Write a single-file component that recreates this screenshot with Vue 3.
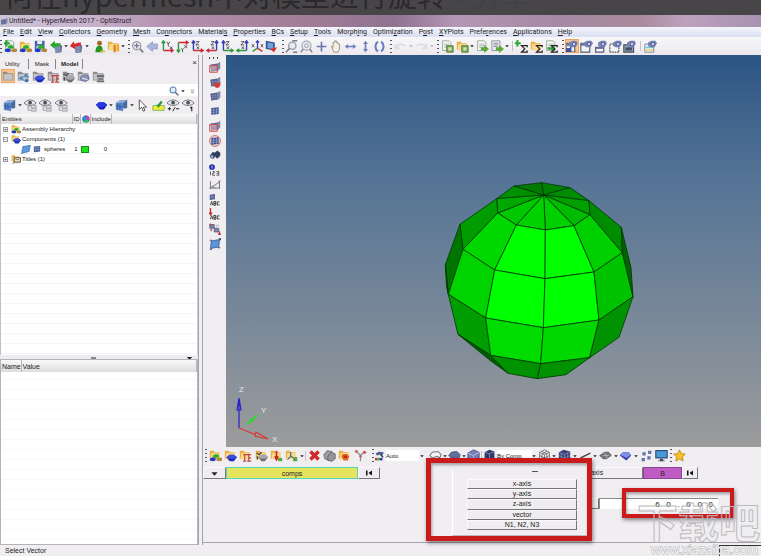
<script setup>
import { ref, h } from 'vue'

const menus = [
  ['', 'F', 'ile'], ['', 'E', 'dit'], ['', 'V', 'iew'], ['', 'C', 'ollectors'], ['', 'G', 'eometry'],
  ['', 'M', 'esh'], ['Co', 'n', 'nectors'], ['Material', 's', ''], ['', 'P', 'roperties'], ['', 'B', 'Cs'],
  ['', 'S', 'etup'], ['', 'T', 'ools'], ['Morph', 'i', 'ng'], ['Optimi', 'z', 'ation'], ['P', 'o', 'st'],
  ['', 'X', 'YPlots'], ['Prefe', 'r', 'ences'], ['', 'A', 'pplications'], ['', 'H', 'elp'],
]

// Every icon is a stack of symbol layers, drawn back to front.
const Icon = (props) => h('svg', { viewBox: '0 0 16 16', class: 'icon', 'aria-hidden': 'true' },
  props.name.split(' ').map((n) => h('use', { href: '#i-' + n })))
Icon.props = ['name']

const topGroups = [
  ['grip', 'page blobs plus', 'folder blobs', 'disk blobs', 'cubeR inarrow', 'arr', 'cubeR outarrow', 'arr'],
  ['person', 'folder cards', 'arr'],
  ['grip', 'fit', 'back', 'axL tY', 'axT tX', 'axB tZ', 'axR tZ', 'axG tZ', 'axH tZ', 'iso', 'film'],
  ['grip', 'zoomw', 'zoomc', 'cross', 'hand', 'lr', 'ud', 'rot'],
  ['grip', 'undo', 'arr', 'redo', 'arr'],
  ['grip', 'page gbox', 'folder gbox', 'arr', 'page garrow', 'page2 garrow', 'arr'],
  ['sep', 'plus sigma', 'folder sigma', 'page garrow2 sigma'],
  ['grip', 'win gear disk2 on', 'win gear', 'winS gear', 'winD gear', 'winF gear'],
  ['sep', 'winC gear'],
]
const browserIcons = ['gfolder on', 'gfolder nodes', 'gfolder slab', 'gfolder te', 'gfolder gslab tick', 'gfolder lens', 'gfolder stack']
const viewIconsA = ['cubeL', 'arr', 'eye tree', 'eye tree', 'eye tree']
const viewIconsB = ['slabc', 'arr', 'cubeL', 'arr', 'cursor', 'ylw', 'eye pm', 'eye one']
const sideIcons = ['cube rframe', 'cube minus', 'cube', 'cubeg', 'cube rframe', 'circ cubeg', 'bino', 'n123', 'meas', 'abc minicube', 'abc rpin', 'nums', 'sheet']

const bottomA = ['grip', 'folder blobs', 'folder slab', 'folder te', 'folder gslab tick', 'folder load', 'folder triad', 'arr', 'sep', 'del', 'cards2', 'folder hot', 'branch']
const bottomB = ['wirehex', 'arr', 'shade', 'arr', 'bluecube', 'sep', 'darkcube']
const bottomC = ['arr', 'wirecube', 'arr', 'meshcube', 'arr', 'line', 'arr', 'plate', 'arr', 'slabl', 'arr', 'fours', 'monitor', 'grip', 'star']

const axes = ['x-axis', 'y-axis', 'z-axis', 'vector', 'N1, N2, N3']
const angle = ref('6   0   .   0   0   0')
const search = ref('')

const faces = [
  ['200,86 252,48 341,75', '#008f00'], ['252,48 335,38 341,75', '#007a00'], ['335,38 420,53 341,75', '#008000'],
  ['420,53 477,92 341,75', '#008c00'], ['477,92 480,134 341,75', '#00a000'], ['480,134 432,167 341,75', '#00bb00'],
  ['432,167 346,180 341,75', '#00d000'], ['346,180 259,165 341,75', '#00d200'], ['259,165 203,129 341,75', '#00c800'],
  ['203,129 200,86 341,75', '#00a800'],
  ['200,86 203,129 99,238 90,163', '#009c00'], ['203,129 259,165 194,300 99,238', '#00d800'],
  ['259,165 346,180 345,326 194,300', '#00ff00'], ['346,180 432,167 492,306 345,326', '#00ff00'],
  ['432,167 480,134 577,248 492,306', '#00cf00'], ['480,134 477,92 574,172 577,248', '#008c00'],
  ['90,163 99,238 55,373 46,284', '#007600'], ['99,238 194,300 167,444 55,373', '#00d400'],
  ['194,300 345,326 340,473 167,444', '#00ff00'], ['345,326 492,306 507,450 340,473', '#00ff00'],
  ['492,306 577,248 609,380 507,450', '#00c300'], ['577,248 574,172 603,293 609,380', '#006400'],
  ['46,284 55,373 50,352', '#005000'],
  ['55,373 167,444 182,556 84,493', '#009e00'], ['167,444 340,473 332,581 182,556', '#00dc00'],
  ['340,473 507,450 479,563 332,581', '#00d800'], ['507,450 609,380 567,502 479,563', '#009200'],
  ['84,493 182,556 234,610 184,574', '#005c00'], ['182,556 332,581 322,626 234,610', '#009200'],
  ['332,581 479,563 408,614 322,626', '#009200'],
]
</script>

<template>
  <svg class="defs" aria-hidden="true">
    <symbol id="i-on" viewBox="0 0 16 16"></symbol>
    <symbol id="i-arr" viewBox="0 0 16 16"><path d="M1 5h14l-7 8z" fill="#222" /></symbol>
    <symbol id="i-folder" viewBox="0 0 16 16"><path d="M1 2h5l1 2h6v8H1z" fill="#e8b048" /><path d="M3 5h11l-1 8H2z" fill="#fbd98a" /></symbol>
    <symbol id="i-gfolder" viewBox="0 0 16 16"><path d="M1 2h5l1 2h7v9H1z" fill="#8c8c90" /><path d="M2 5h11v7H2z" fill="#c6c4c6" /></symbol>
    <symbol id="i-page" viewBox="0 0 16 16"><path d="M2 1h8l2 2v10H2z" fill="#f7f8f4" stroke="#8d9a8a" /><path d="M4 5h6M4 7h6M4 9h5" stroke="#9ab" /></symbol>
    <symbol id="i-page2" viewBox="0 0 16 16"><path d="M1 1h10v12H1z" fill="#e8e8ee" stroke="#888" /><path d="M3 4h6M3 6h6M3 8h5" stroke="#889" /></symbol>
    <symbol id="i-blobs" viewBox="0 0 16 16"><path d="M5 8l3-2 4 1v3l-4 1-3-1z" fill="#2bae2b" /><path d="M1 12l3-2 4 1v3l-3 1-4-1z" fill="#2036c4" /><path d="M9 12l3-2 4 1v3l-3 1-4-1z" fill="#b08a3a" /></symbol>
    <symbol id="i-plus" viewBox="0 0 16 16"><path d="M3 0v8M0 4h7" stroke="#29a629" stroke-width="2.4" /></symbol>
    <symbol id="i-disk" viewBox="0 0 16 16"><path d="M1 1h12v11H1z" fill="#47659c" /><path d="M4 1h6v4H4z" fill="#e9eef8" /><path d="M3 7h8v5H3z" fill="#c8d4e8" /></symbol>
    <symbol id="i-disk2" viewBox="0 0 16 16"><path d="M0 8h8v7H0z" fill="#3b4f9c" /><path d="M2 8h4v2H2z" fill="#fff" /></symbol>
    <symbol id="i-cubeR" viewBox="0 0 16 16"><path d="M6 7l7-1 2 1-1 8-7 1z" fill="#5a6790" /><path d="M6 7l7-1v8l-6 2z" fill="#7f8cb4" /></symbol>
    <symbol id="i-inarrow" viewBox="0 0 16 16"><path d="M0 6l6-5v3h7v4H6v3z" fill="#2ba52b" /></symbol>
    <symbol id="i-outarrow" viewBox="0 0 16 16"><path d="M0 6l6-5v3h8v4H6v3z" fill="#d82c2c" transform="rotate(-12 8 8)" /></symbol>
    <symbol id="i-person" viewBox="0 0 16 16"><circle cx="8" cy="4" r="3" fill="#a5642c" /><path d="M3 15c0-6 2-8 5-8s4 2 4 8z" fill="#279427" /><path d="M9 13h6v2H9z" fill="#d8c030" /></symbol>
    <symbol id="i-cards" viewBox="0 0 16 16"><path d="M8 6h3v9H8z" fill="#e08424" /><path d="M12 5h3v9h-3z" fill="#f4a637" /></symbol>
    <symbol id="i-fit" viewBox="0 0 16 16"><circle cx="7" cy="7" r="5" fill="#e3e6f0" stroke="#9c9fac" stroke-width="1.6" /><path d="M7 4v6M4 7h6" stroke="#73768e" stroke-width="1.5" /><path d="M11 11l4 4" stroke="#888" stroke-width="2.4" /></symbol>
    <symbol id="i-back" viewBox="0 0 16 16"><path d="M1 8l7-6v3h6v6H8v3z" fill="#a9b6dc" stroke="#8e9ac8" /></symbol>
    <symbol id="i-axL" viewBox="0 0 16 16"><path d="M3 13V2M1 4l2-3 2 3" stroke="#2e9c3e" stroke-width="1.7" fill="none" /><path d="M3 13h11M12 11l3 2-3 2" stroke="#cc2d3a" stroke-width="1.7" fill="none" /></symbol>
    <symbol id="i-axT" viewBox="0 0 16 16"><path d="M3 3v11M1 12l2 3 2-3" stroke="#2e9c3e" stroke-width="1.7" fill="none" /><path d="M3 3h11M12 1l3 2-3 2" stroke="#cc2d3a" stroke-width="1.7" fill="none" /></symbol>
    <symbol id="i-axB" viewBox="0 0 16 16"><path d="M3 13V2M1 4l2-3 2 3" stroke="#3540b8" stroke-width="1.7" fill="none" /><path d="M3 13h11M12 11l3 2-3 2" stroke="#cc2d3a" stroke-width="1.7" fill="none" /></symbol>
    <symbol id="i-axR" viewBox="0 0 16 16"><path d="M13 13V2M11 4l2-3 2 3" stroke="#3540b8" stroke-width="1.7" fill="none" /><path d="M13 13H2M4 11l-3 2 3 2" stroke="#cc2d3a" stroke-width="1.7" fill="none" /></symbol>
    <symbol id="i-axG" viewBox="0 0 16 16"><path d="M3 13V2M1 4l2-3 2 3" stroke="#3540b8" stroke-width="1.7" fill="none" /><path d="M3 13h11M12 11l3 2-3 2" stroke="#2e9c3e" stroke-width="1.7" fill="none" /></symbol>
    <symbol id="i-axH" viewBox="0 0 16 16"><path d="M13 13V2M11 4l2-3 2 3" stroke="#3540b8" stroke-width="1.7" fill="none" /><path d="M13 13H2M4 11l-3 2 3 2" stroke="#2e9c3e" stroke-width="1.7" fill="none" /></symbol>
    <symbol id="i-tY" viewBox="0 0 16 16"><path d="M7 2l2 3 2-3M9 5v3M11 8l3 3M14 8l-3 3" stroke="#333" fill="none" /></symbol>
    <symbol id="i-tX" viewBox="0 0 16 16"><path d="M10 6l4 4M14 6l-4 4M6 10l2 2 2-2M8 12v3" stroke="#333" fill="none" /></symbol>
    <symbol id="i-tZ" viewBox="0 0 16 16"><path d="M6 2h4L6 6h4M7 8l3 3M10 8l-3 3" stroke="#333" fill="none" /></symbol>
    <symbol id="i-iso" viewBox="0 0 16 16"><path d="M8 10V1M6 3l2-2 2 2" stroke="#3540b8" stroke-width="1.6" fill="none" /><path d="M8 10l-6 4" stroke="#2e9c3e" stroke-width="1.8" /><path d="M8 10l6 4" stroke="#cc2d3a" stroke-width="1.8" /><path d="M1 5l3 4M4 5l-3 4M12 5l3 4M15 5l-3 4" stroke="#444" /></symbol>
    <symbol id="i-film" viewBox="0 0 16 16"><path d="M1 1l11 2v10L1 11z" fill="#33508f" /><path d="M3 3l7 1v7l-7-1z" fill="#6fa0d8" /><path d="M6 11l9-2-4 6z" fill="#d8352a" /></symbol>
    <symbol id="i-zoomw" viewBox="0 0 16 16"><circle cx="9" cy="7" r="4.500" fill="#e8eaf0" stroke="#9598a6" stroke-width="1.6" /><path d="M6 10l-5 5M9 1h6M10 15h5" stroke="#777b90" stroke-width="1.8" /></symbol>
    <symbol id="i-zoomc" viewBox="0 0 16 16"><circle cx="8" cy="7" r="5.500" fill="#eceef4" stroke="#a6a8b4" stroke-width="1.5" /><circle cx="8" cy="7" r="2.400" fill="none" stroke="#888ba0" /><path d="M4 11l-3 4M12 11l3 4" stroke="#888" stroke-width="1.8" /></symbol>
    <symbol id="i-cross" viewBox="0 0 16 16"><path d="M8 2v12M2 8h12" stroke="#6a77b0" stroke-width="2" /></symbol>
    <symbol id="i-hand" viewBox="0 0 16 16"><path d="M3 8l2 1V3h2v-2h2v2h2v2h2v6l-2 4H6z" fill="#f4ede2" stroke="#8c867e" /></symbol>
    <symbol id="i-lr" viewBox="0 0 16 16"><path d="M1 8l4-3v2h6V5l4 3-4 3V9H5v2z" fill="#6c7ebc" /></symbol>
    <symbol id="i-ud" viewBox="0 0 16 16"><path d="M8 1l3 4H9v6h2l-3 4-3-4h2V5H5z" fill="#6c7ebc" /></symbol>
    <symbol id="i-rot" viewBox="0 0 16 16"><path d="M6 2C2 5 2 11 6 14M10 2c4 3 4 9 0 12" stroke="#6c7ebc" stroke-width="2.6" fill="none" /></symbol>
    <symbol id="i-undo" viewBox="0 0 16 16"><path d="M2 10c2-5 8-6 12-3M2 5v5h5" stroke="#dddce1" stroke-width="2.2" fill="none" /></symbol>
    <symbol id="i-redo" viewBox="0 0 16 16"><path d="M14 10C12 5 6 4 2 7M14 5v5H9" stroke="#dddce1" stroke-width="2.2" fill="none" /></symbol>
    <symbol id="i-arrg" viewBox="0 0 16 16"><path d="M1 5h14l-7 8z" fill="#b4b2b8" /></symbol>
    <symbol id="i-gbox" viewBox="0 0 16 16"><path d="M7 7h8v8H7z" fill="#77a850" stroke="#557838" /><path d="M9 9h4v4H9z" fill="#cfe0bc" /></symbol>
    <symbol id="i-garrow" viewBox="0 0 16 16"><path d="M6 9h4V6l6 5-6 5v-3H6z" fill="#5fa83c" /></symbol>
    <symbol id="i-garrow2" viewBox="0 0 16 16"><path d="M3 9h5V6l5 5-5 4v-3H3z" fill="#35a035" /></symbol>
    <symbol id="i-sigma" viewBox="0 0 16 16"><path d="M15 9V7H8l4 4-4 4h7v-2" stroke="#222" stroke-width="1.5" fill="none" /></symbol>
    <symbol id="i-win" viewBox="0 0 16 16"><path d="M1 4h11v11H1z" fill="#f4f4f8" stroke="#555a70" stroke-width="1.4" /><path d="M1 4h11v3H1z" fill="#6a7498" /></symbol>
    <symbol id="i-winS" viewBox="0 0 16 16"><path d="M2 9h10v6H2z" fill="#f4f4f8" stroke="#555a70" stroke-width="1.4" /><path d="M2 9h10v2H2z" fill="#6a7498" /></symbol>
    <symbol id="i-winD" viewBox="0 0 16 16"><path d="M1 5h11v10H1z" fill="#f4f4f8" stroke="#555" stroke-dasharray="2 1" stroke-width="1.4" /></symbol>
    <symbol id="i-winF" viewBox="0 0 16 16"><path d="M1 6h12v9H1z" fill="#9aa" stroke="#444a60" stroke-width="1.4" /><path d="M3 9h8v4H3z" fill="#444a70" /></symbol>
    <symbol id="i-winC" viewBox="0 0 16 16"><path d="M1 5h11v10H1z" fill="#eef6fa" stroke="#6a7498" /><path d="M2 8h9v2H2z" fill="#6cc6d8" /><path d="M2 11h9v3H2z" fill="#e6d890" /></symbol>
    <symbol id="i-gear" viewBox="0 0 16 16"><path d="M5 3l4-2h5l2 3-3 5H8L5 7z" fill="#7680b4" /><circle cx="11" cy="5" r="2" fill="#d8dcf0" stroke="#4c5590" /></symbol>
    <symbol id="i-nodes" viewBox="0 0 16 16"><path d="M5 10l5-3 5 2M5 10l5 4 4-1" stroke="#3a7bb0" fill="none" /><circle cx="5" cy="10" r="2" fill="#3a8bc8" /><circle cx="11" cy="7" r="2" fill="#3a8bc8" /><circle cx="12" cy="13" r="2" fill="#2f6fae" /></symbol>
    <symbol id="i-slab" viewBox="0 0 16 16"><path d="M3 10l4-3h5l4 3-4 5H7z" fill="#1a2cb4" /><path d="M3 10l4-3h5l4 3-5 2H7z" fill="#3a50dc" /></symbol>
    <symbol id="i-gslab" viewBox="0 0 16 16"><path d="M4 10l4-3h5l3 3-4 5H8z" fill="#6c6c70" /><path d="M4 10l4-3h5l3 3-4 2H8z" fill="#a8a8ac" /></symbol>
    <symbol id="i-tick" viewBox="0 0 16 16"><path d="M2 5l3 2 3-3M3 9v4" stroke="#444" stroke-width="1.6" fill="none" /></symbol>
    <symbol id="i-te" viewBox="0 0 16 16"><path d="M5 7h10M7 7v8M12 7v8M5 15h4M10 15h5M12 11h3" stroke="#b84a44" stroke-width="1.4" fill="none" /></symbol>
    <symbol id="i-lens" viewBox="0 0 16 16"><path d="M4 9l4-3 6 1 1 4-4 3-6-1z" fill="#8e94c0" stroke="#62688e" /><path d="M6 10l7 2" stroke="#fff" /></symbol>
    <symbol id="i-stack" viewBox="0 0 16 16"><path d="M6 6h9v3H6zM7 10h7v2H7zM6 13h9v2H6z" fill="#6e6c72" /></symbol>
    <symbol id="i-cubeL" viewBox="0 0 16 16"><path d="M5 2l10-1v10l-4 1z" fill="#4c6ca4" /><path d="M1 4l9 1v10l-9-2z" fill="#5a88cc" /><path d="M5 2l10-1-5 4-9-1z" fill="#8cacdc" /><path d="M3 6v8M6 5v9M1 8l9 2" stroke="#2e4f8c" stroke-width=".8" /></symbol>
    <symbol id="i-eye" viewBox="0 0 16 16"><path d="M0 5c4-5 11-5 15 0-4 4-11 4-15 0z" fill="#e6e6ea" stroke="#77777f" stroke-width="1.200" /><circle cx="7.500" cy="4.500" r="2.300" fill="#4b4f5c" /></symbol>
    <symbol id="i-tree" viewBox="0 0 16 16"><path d="M5 8v6h3M5 10h3M9 8h6v3H9zM9 12h6v3H9z" stroke="#9c9ca2" fill="#dadade" /></symbol>
    <symbol id="i-pm" viewBox="0 0 16 16"><path d="M1 12h4M3 10v4M7 15l3-5M11 12h4" stroke="#222" stroke-width="1.2" /></symbol>
    <symbol id="i-one" viewBox="0 0 16 16"><path d="M10 11l2-1v5" stroke="#222" stroke-width="1.4" fill="none" /></symbol>
    <symbol id="i-slabc" viewBox="0 0 16 16"><path d="M1 7l4-3h6l4 3-4 6H6z" fill="#1320b8" /><path d="M1 7l4-3h6l4 3-5 3H6z" fill="#2a3ae0" /></symbol>
    <symbol id="i-cursor" viewBox="0 0 16 16"><path d="M4 1v12l3-3 2 5 2-1-2-4h4z" fill="#fff" stroke="#444" stroke-width="1.1" /></symbol>
    <symbol id="i-ylw" viewBox="0 0 16 16"><path d="M1 8h14v6H1z" fill="#f1ec34" stroke="#6ab66e" /><path d="M8 11L5 7h2l4-5 2 2-3 4z" fill="#2a9a3c" /></symbol>
    <symbol id="i-cube" viewBox="0 0 16 16"><path d="M2 5l10-2 3-2v9l-3 3-9 1z" fill="#7b87a8" /><path d="M2 5l9-1v8l-8 2z" fill="#4f5c8a" /><path d="M5 5v8M8 5v8M2 8l9-1M3 11l8-2" stroke="#8492b8" stroke-width=".8" /></symbol>
    <symbol id="i-cubeg" viewBox="0 0 16 16"><path d="M3 4l10-1v9L3 13z" fill="#3e5590" /><path d="M6 4v9M10 3v9M3 7l10-1M3 10l10-1" stroke="#8fa4cc" stroke-width=".9" /></symbol>
    <symbol id="i-rframe" viewBox="0 0 16 16"><path d="M1 6h10v9H1z" fill="#f0c8c870" stroke="#d84848" stroke-width="1.3" /></symbol>
    <symbol id="i-minus" viewBox="0 0 16 16"><path d="M6 9c3 1 6 1 9-1 1 4-1 8-4 8s-5-3-5-7z" fill="#d43a3a" /></symbol>
    <symbol id="i-circ" viewBox="0 0 16 16"><circle cx="8" cy="8" r="7.200" fill="#f3dede" stroke="#cc5a5a" stroke-width="1.2" /></symbol>
    <symbol id="i-bino" viewBox="0 0 16 16"><path d="M1 9l4-5 4 1 1 3-4 5-4-1zM8 5l3-3 4 3v4l-4 4-2-2z" fill="#2f3f60" /><circle cx="4" cy="10" r="2" fill="#8ea8d4" /></symbol>
    <symbol id="i-n123" viewBox="0 0 16 16"><circle cx="4" cy="4" r="3.800" fill="#1a2cae" /><path d="M4 2v4" stroke="#fff" /><path d="M2 10v5M5 10h2v2H5v3h3M10 10h3v5h-3M10 12.500h3" stroke="#333" fill="none" /></symbol>
    <symbol id="i-meas" viewBox="0 0 16 16"><path d="M2 3v10M2 12l12-8v9M2 12h12M5 9l3 4" stroke="#55555c" fill="none" /><circle cx="2" cy="12" r="1.500" fill="#888" /><circle cx="14" cy="3" r="1.300" fill="#888" /></symbol>
    <symbol id="i-abc" viewBox="0 0 16 16"><path d="M2 15l1.500-5L5 15M6.500 10h2.500v5H6.500zM6.500 12.500H9M14 10.500h-3v4h3" stroke="#333" stroke-width="1.200" fill="none" /></symbol>
    <symbol id="i-minicube" viewBox="0 0 16 16"><path d="M1 1l7-1v7l-7 1z" fill="#4c5b8e" /><path d="M3 1v6M5.500 1v6M1 4h7" stroke="#93a0c4" stroke-width=".7" /></symbol>
    <symbol id="i-rpin" viewBox="0 0 16 16"><path d="M2 0v8M0 6l2 3 2-3" stroke="#c62c2c" stroke-width="1.800" fill="none" /></symbol>
    <symbol id="i-nums" viewBox="0 0 16 16"><path d="M1 2h6v5H1zM7 7h6v5H7z" fill="#7a84a8" stroke="#505878" /><path d="M3 8v3M14 11v4M1 1l3 2M12 14l2 2 2-2" stroke="#c63a3a" stroke-width="1.600" fill="none" /><path d="M9 2h4v3H9z" fill="#c8cad8" /></symbol>
    <symbol id="i-sheet" viewBox="0 0 16 16"><path d="M3 4l11-2-1 10-11 2z" fill="#5f92d8" stroke="#2e5494" /><path d="M1 3h3M13 1h3v2M12 13h3M1 15h3" stroke="#4d4d65" stroke-width="1.600" /></symbol>
    <symbol id="i-plane" viewBox="0 0 16 16"><path d="M3 4l12-2-2 10-12 3z" fill="#5f9ae0" stroke="#2e64a4" /></symbol>
    <symbol id="i-load" viewBox="0 0 16 16"><path d="M8 2v10M6 9l2 4 2-4" stroke="#cc2020" stroke-width="2" fill="none" /><path d="M10 11h5v4h-5z" fill="#56a83e" /></symbol>
    <symbol id="i-triad" viewBox="0 0 16 16"><path d="M7 4v5l-4 4M7 9l4 2" stroke="#44668a" stroke-width="1.500" fill="none" /><path d="M10 10h5v5h-5z" fill="#58a445" /></symbol>
    <symbol id="i-del" viewBox="0 0 16 16"><path d="M3 3l10 10M13 3L3 13" stroke="#d22a2a" stroke-width="4.400" /></symbol>
    <symbol id="i-cards2" viewBox="0 0 16 16"><path d="M1 7l4-5 6 1v7l-4 4-5-2z" fill="#9c9ca4" stroke="#66666c" /><path d="M6 9l4-5 5 2v6l-4 3-5-1z" fill="#95959e" stroke="#5c5c64" /></symbol>
    <symbol id="i-hot" viewBox="0 0 16 16"><path d="M6 6h5l3 3-2 5H7L4 9z" fill="#e36a1c" /><path d="M7 8h4v3H7z" fill="#c02020" /></symbol>
    <symbol id="i-branch" viewBox="0 0 16 16"><path d="M8 15V8L4 4M8 8l4-4" stroke="#8e8e98" stroke-width="1.600" fill="none" /><circle cx="3" cy="3" r="2" fill="#c87070" /><circle cx="13" cy="4" r="2" fill="#c85858" /><circle cx="8" cy="9" r="1.500" fill="#c85858" /></symbol>
    <symbol id="i-auto" viewBox="0 0 16 16"><path d="M1 4l5-3 8 1-2 5-4-1-5 1z" fill="#525f96" /><path d="M9 6l4 4" stroke="#333" stroke-width="2" /><path d="M0 11h4v4H0z" fill="#c33" /><path d="M4 11h4v4H4z" fill="#3a3" /><path d="M8 11h4v4H8z" fill="#33c" /></symbol>
    <symbol id="i-wirehex" viewBox="0 0 16 16"><path d="M1 8l3-4 7-1 4 4-2 4-3-2-6 2z" fill="#f4f4f6" stroke="#77777f" stroke-width="1.300" /></symbol>
    <symbol id="i-shade" viewBox="0 0 16 16"><path d="M1 8l3-4 7-1 4 4-2 5-3-2-6 1z" fill="#62709e" stroke="#3f4a74" /></symbol>
    <symbol id="i-bluecube" viewBox="0 0 16 16"><path d="M1 5l7-4 7 3v8l-7 3-7-3z" fill="#7580b4" stroke="#4b568c" /><path d="M1 5l7 3 7-4M8 8v7" stroke="#c4cae4" fill="none" /></symbol>
    <symbol id="i-darkcube" viewBox="0 0 16 16"><path d="M2 4l6-3 6 2v9l-6 3-6-3z" fill="#2f3a68" /><path d="M2 4l6 2 6-3M8 6v9" stroke="#8690be" fill="none" /></symbol>
    <symbol id="i-wirecube" viewBox="0 0 16 16"><path d="M2 4l6-3 6 3v8l-6 3-6-3zM2 4l6 3 6-3M8 7v8M2 8l6 3 6-3M5 3l6 3v8M11 3L5 6v8" fill="#f4f4f4" stroke="#66666e" /></symbol>
    <symbol id="i-meshcube" viewBox="0 0 16 16"><path d="M1 4l6-3 8 2v9l-7 3-7-3z" fill="#3a4478" /><path d="M1 4l7 3 7-4M8 7v8M1 8l7 3 7-3M4 5v8M12 5v8" stroke="#929bc6" stroke-width=".8" fill="none" /></symbol>
    <symbol id="i-line" viewBox="0 0 16 16"><path d="M2 11l12-6" stroke="#444" stroke-width="1.600" /></symbol>
    <symbol id="i-plate" viewBox="0 0 16 16"><path d="M1 8l6-4h5l3 4-6 4H5z" fill="#77777e" stroke="#55555a" /><path d="M5 8h7M7 5l3 6" stroke="#bbb" /></symbol>
    <symbol id="i-slabl" viewBox="0 0 16 16"><path d="M1 8l4-4h7l3 4-6 6z" fill="#3038a8" /><path d="M1 7l4-3h7l3 3-6 4z" fill="#8090e4" /></symbol>
    <symbol id="i-fours" viewBox="0 0 16 16"><path d="M3 4h4v4H3zM10 2h4v4h-4zM2 11h4v4H2zM9 9h4v4H9z" fill="#6472a6" /></symbol>
    <symbol id="i-monitor" viewBox="0 0 16 16"><path d="M1 2h14v9H1z" fill="#4a9ad8" stroke="#2c4c84" stroke-width="1.400" /><path d="M6 12h4v2H6zM4 14h8v1H4z" fill="#445" /></symbol>
    <symbol id="i-star" viewBox="0 0 16 16"><path d="M8 1l2.200 4.700 5 .6-3.700 3.500 1 5L8 12.300 3.500 14.800l1-5L.8 6.300l5-.6z" fill="#fcbf26" stroke="#b8860f" /></symbol>
    <symbol id="i-search" viewBox="0 0 16 16"><circle cx="6.500" cy="6.500" r="4.800" fill="#dfeefa" stroke="#5f86ac" stroke-width="1.700" /><path d="M10 10l5 5" stroke="#6a7484" stroke-width="2.400" /></symbol>
    <symbol id="i-more" viewBox="0 0 16 16"><path d="M3 2l5 4 5-4M3 9l5 4 5-4" stroke="#444" stroke-width="2" fill="none" /></symbol>
    <symbol id="i-wheel" viewBox="0 0 16 16"><circle cx="8" cy="8" r="7" fill="#2a50d8" /><path d="M8 8V1a7 7 0 0 1 6 10z" fill="#d838a8" /><path d="M8 8l6 4a7 7 0 0 1-11 1z" fill="#30c840" /><path d="M8 8L2 12A7 7 0 0 1 8 1z" fill="#2090d8" /></symbol>
    <symbol id="i-prev" viewBox="0 0 16 16"><path d="M2 3h3v10H2zM14 3v10L7 8z" fill="#111" /></symbol>
    <symbol id="i-card" viewBox="0 0 16 16"><path d="M5 6h10v7H5z" fill="#f3e8c8" stroke="#4c4438" stroke-width="1.500" /><path d="M7 9h6M5 13l-2 3" stroke="#443" /></symbol>
  </svg>

  <div class="page">
    <div class="banner"><span class="headline">何在hypermesh中对模型进行旋转</span><span class="dim">&lt; 分享</span></div>
    <header class="title"><Icon name="cube" /><span>Untitled* - HyperMesh 2017 - OptiStruct</span></header>
    <nav class="menu">
      <a v-for="m in menus" :key="m.join('')" href="#">{{ m[0] }}<u>{{ m[1] }}</u>{{ m[2] }}</a>
    </nav>
    <div class="toolbar">
      <div v-for="(g, i) in topGroups" :key="i" class="group">
        <template v-for="(n, j) in g" :key="j">
          <i v-if="n === 'grip' || n === 'sep'" :class="n"></i>
          <button v-else class="tool" :class="{ small: n === 'arr', active: n.endsWith(' on') }" :aria-label="n"><Icon :name="n === 'arr' && i === 4 ? 'arrg' : n" /></button>
        </template>
      </div>
    </div>

    <main class="main">
      <aside class="browser">
        <div class="tabs">
          <button>Utility</button><button>Mask</button><button class="current">Model</button><button class="close" aria-label="Close">×</button>
        </div>
        <div class="kinds">
          <button v-for="n in browserIcons" :key="n" class="tool" :class="{ active: n.endsWith(' on') }" :aria-label="n"><Icon :name="n" /></button>
        </div>
        <div class="search">
          <input v-model="search" type="text" aria-label="Search" />
          <button class="tool find" aria-label="Find"><Icon name="search" /></button>
          <button class="tool small" aria-label="Options"><Icon name="arr" /></button>
          <button class="tool more" aria-label="More"><Icon name="more" /></button>
        </div>
        <div class="views">
          <div class="va"><button v-for="(n, i) in viewIconsA" :key="i" class="tool" :class="{ small: n === 'arr' }" :aria-label="n"><Icon :name="n" /></button></div>
          <div class="vb"><button v-for="(n, i) in viewIconsB" :key="i" class="tool" :class="{ small: n === 'arr' }" :aria-label="n"><Icon :name="n" /></button></div>
        </div>
        <div class="treebox">
          <table class="tree">
            <thead><tr><th class="c1">Entities</th><th class="c2">ID</th><th class="c3"><Icon name="wheel" /></th><th class="c4">Include</th><th></th></tr></thead>
            <tbody>
              <tr><td><div class="node"><b>+</b><Icon name="folder blobs" />Assembly Hierarchy</div></td><td></td><td></td><td></td><td></td></tr>
              <tr><td><div class="node"><b>−</b><Icon name="folder slab" />Components (1)</div></td><td></td><td></td><td></td><td></td></tr>
              <tr><td><div class="node child"><Icon name="plane" /><Icon name="cubeg" /><span>spheres</span></div></td><td class="num">1</td><td><i class="swatch"></i></td><td class="num inc">0</td><td></td></tr>
              <tr><td><div class="node"><b>+</b><Icon name="folder card" />Titles (1)</div></td><td></td><td></td><td></td><td></td></tr>
            </tbody>
          </table>
        </div>
        <div class="splitter"><span></span><Icon name="arr" /></div>
        <div class="props"><table><thead><tr><th class="pn">Name</th><th>Value</th></tr></thead></table></div>
      </aside>

      <section class="work">
        <div class="side">
          <i class="hgrip"></i>
          <button v-for="(n, i) in sideIcons" :key="i" class="tool" :aria-label="n"><Icon :name="n" /></button>
        </div>
        <div class="viewport">
          <svg viewBox="0 0 535 392" preserveAspectRatio="xMinYMax meet">
            <g transform="translate(204 115) scale(.33333)" stroke="#003c00" stroke-width="2.500" stroke-linejoin="round">
              <polygon v-for="f in faces" :key="f[0]" :points="f[0]" :fill="f[1]" />
            </g>
            <g fill="none">
              <path d="M13 373V347M11 355l2-12 2 12z" stroke="#2424c8" stroke-width="1.200" />
              <path d="M13 373l17 7M30 377l12 7-13-3z" stroke="#d83a34" stroke-width="1.200" />
              <path d="M19 370l6-7 8-4-6 8z" fill="#46c846" />
            </g>
            <g fill="#e8e8e8" font-family="Liberation Sans, sans-serif" font-size="8"><text x="13" y="337">Z</text><text x="35" y="358">Y</text><text x="46" y="387">X</text></g>
          </svg>
        </div>
        <div class="lower">
          <div class="modes">
            <div class="m1"><template v-for="(n, i) in bottomA" :key="i"><i v-if="n === 'grip' || n === 'sep'" :class="n"></i><button v-else class="tool" :class="{ small: n === 'arr' }" :aria-label="n"><Icon :name="n" /></button></template></div>
            <div class="m2"><i class="grip"></i><Icon name="auto" /><select aria-label="Color mode"><option>Auto</option></select><button class="tool small" aria-label="Open"><Icon name="arr" /></button></div>
            <div class="m3"><template v-for="(n, i) in bottomB" :key="i"><i v-if="n === 'sep'" class="sep"></i><button v-else class="tool" :class="{ small: n === 'arr' }" :aria-label="n"><Icon :name="n" /></button></template></div>
            <select class="by" aria-label="Color by"><option>By Comp</option></select>
            <div class="m4"><template v-for="(n, i) in bottomC" :key="i"><i v-if="n === 'grip'" class="grip"></i><button v-else class="tool" :class="{ small: n === 'arr' }" :aria-label="n"><Icon :name="n" /></button></template></div>
          </div>
          <div class="panel">
            <div class="entity">
              <button class="raised drop" aria-label="Entity type"><Icon name="arr" /></button><button class="comps">comps</button><button class="raised reset" aria-label="Reset"><Icon name="prev" /></button>
            </div>
            <div class="right">
              <div class="dir"><button class="raised axis">z-axis</button><button class="base">B</button><button class="raised reset" aria-label="Reset"><Icon name="prev" /></button></div>
              <label class="angle"><span class="raised"></span><input v-model="angle" type="text" aria-label="Angle" /></label>
            </div>
          </div>
          <div class="popup"><div class="choices"><i class="mark"></i><button v-for="a in axes" :key="a" class="raised">{{ a }}</button></div></div>
          <div class="focus"></div>
        </div>
      </section>
    </main>

    <footer class="status"><span>Select Vector</span><i></i></footer>
    <div class="watermark"><span class="wm">下载吧</span><span class="url">www.xiazaiba.com</span></div>
  </div>
</template>

<style>
body { margin: 0; background: #f0eef1; overflow: hidden; }
</style>

<style scoped>
.page { position: relative; display: grid; grid-template-rows: 15px 12px 10px 18px 1fr 11px; min-height: 100vh; font: 6px/10px "Liberation Sans", Arial, sans-serif; color: #222; background: #f0eef1; }
.page * { box-sizing: border-box; }
.defs { position: absolute; width: 0; height: 0; }
button { font: inherit; color: inherit; background: none; border: 0; padding: 0; margin: 0; }
input, select { font: inherit; color: inherit; border: 0; padding: 0; margin: 0; border-radius: 0; appearance: none; background: #fff; min-width: 0; outline: 0; }
.icon { display: block; width: 13px; height: 13px; flex: none; }
.tool { display: grid; place-items: center; width: 14px; height: 14px; flex: none; }
.tool.small { width: 4px; }
.tool.small .icon { width: 4px; height: 4px; }
.tool.active { background: #f9c58c; outline: 1px solid #e5a868; outline-offset: -1px; }
.grip { width: 2px; height: 13px; flex: none; background: repeating-linear-gradient(#555 0 1px, transparent 1px 4px); }
.sep { width: 1px; height: 10px; flex: none; background: #c4c2c6; }

.banner { overflow: hidden; display: flex; align-items: flex-end; background: #474548; color: #2b292c; font: 29px/30px "Noto Sans CJK SC", sans-serif; white-space: nowrap; padding: 0 0 6px 4px; }
.headline { flex: none; }
.dim { padding-left: 4px; color: #3e424a; }
.title { display: flex; align-items: center; gap: 1px; overflow: hidden; font: 7px/11px Roboto, "Noto Sans", sans-serif; color: #2a2230; background: linear-gradient(90deg, #cbc3d4 0, #c7b2cb 12%, #b391ae 22%, #a47f98 38%, #8f7390 52%, #b596b4 60%, #a68aa6 72%, #a98a9c 84%, #bda2bd 90%, #a692b0 100%); }
.title .icon { width: 8px; height: 9px; }
.menu { display: flex; align-items: center; gap: 6px; padding-left: 3px; background: linear-gradient(#f4f5fc, #d9dff2); font: 7px/9px Roboto, "Noto Sans", sans-serif; }
.menu a { color: #1c1c24; text-decoration: none; white-space: nowrap; }
.toolbar { display: grid; grid-template-columns: 92px 36px 154px 108px 47px 75px 50px 78px 20px; align-items: center; background: linear-gradient(#f8f7fa, #ebe9ee); }
.group { display: flex; align-items: center; justify-content: space-between; padding-right: 3px; }

.main { display: grid; grid-template-columns: 199px 1fr; min-height: 0; }
.browser { display: grid; grid-template-rows: 14px 15px 12px 18px 241px 4px 1fr; border-right: 1px solid #a6a4a8; min-height: 0; }
.tabs { display: flex; align-items: center; padding-top: 3px; }
.tabs button { height: 10px; padding: 0 8px 0 5px; border-right: 1px solid #88868a; line-height: 8px; }
.tabs button + button { padding: 0 6px; }
.tabs .current { font-weight: 700; padding: 0 4px 0 5px; }
.tabs .close { margin-left: auto; border: 0; padding: 0 1px; font-size: 8px; align-self: flex-start; line-height: 4px; }
.kinds { display: flex; gap: 1px; padding-left: 1px; }
.search { display: grid; grid-template-columns: 167px 14px 6px 11px; align-items: center; background: #fff; }
.find .icon { width: 10px; height: 10px; }
.more { width: 11px; }
.more .icon { width: 5px; height: 5px; }
.views { display: flex; align-items: center; justify-content: space-between; padding: 0 2px; }
.va, .vb { display: flex; align-items: center; justify-content: space-between; width: 66px; }
.vb { width: 102px; }
.treebox, .props { min-height: 0; overflow: hidden; border-left: 1px solid #c2c0c4; }
.treebox { border-right: 1px solid #d0ced2; background: repeating-linear-gradient(#fff 0 9px, #f2f6f8 9px 10px); }
table { width: 100%; border-collapse: collapse; table-layout: fixed; }
th { height: 10px; padding: 0; font-weight: 400; text-align: left; line-height: 9px; background: linear-gradient(#fafafa, #dddbde); border-right: 1px solid #bbb9bd; }
.c1 { width: 71px; } .c2 { width: 8px; } .c3 { width: 10px; } .c4 { width: 21px; }
.tree th { padding-left: 1px; }
.tree th .icon { width: 8px; height: 8px; }
td { height: 10px; padding: 0; line-height: 9px; white-space: nowrap; }
.node { display: flex; align-items: center; gap: 1px; padding-left: 2px; }
.node .icon { width: 10px; height: 10px; }
.node b { width: 5px; height: 5px; margin-right: 2px; border: 1px solid #999; font: 5px/3px "Liberation Sans", sans-serif; text-align: center; }
.node.child { padding-left: 20px; }
.node.child span { padding-left: 1px; }
.num { text-align: center; }
.inc { padding-left: 10px; }
.swatch { display: block; width: 8px; height: 7px; margin-left: 1px; background: #1ce41c; border: 1px solid #149014; }
.splitter { display: grid; grid-template-columns: 1fr 12px; align-items: center; background: #eeecef; }
.splitter span { width: 5px; height: 2px; background: #88868a; justify-self: center; }
.splitter .icon { width: 7px; height: 6px; }
.props { font-size: 7px; border: 1px solid #b5b3b7; background: repeating-linear-gradient(#fff 0 9px, #f6f9fa 9px 10px); }
.props th { height: 12px; padding-left: 1px; line-height: 11px; }
.pn { width: 20px; }

.work { display: grid; grid-template-columns: 23px 1fr; grid-template-rows: 1fr 98px; margin-left: 3px; border-left: 1px solid #a6a4a8; min-width: 0; }
.side { display: flex; flex-direction: column; align-items: center; justify-content: space-between; height: 196px; padding-top: 2px; }
.side .tool { height: 14px; }
.side .icon { width: 12px; height: 12px; }
.hgrip { width: 12px; height: 2px; background: repeating-linear-gradient(90deg, #444 0 1px, transparent 1px 4px); }
.viewport { background: linear-gradient(#2c5584 0, #557496 32%, #7a8999 68%, #9c9c9c 100%); min-height: 0; }
.viewport svg { display: block; width: 100%; height: 100%; }
.lower { position: relative; grid-column: 1 / -1; display: grid; grid-template-rows: 17px 1fr; border-bottom: 1px solid #a6a4a8; margin-bottom: 2px; min-width: 0; }
.modes { display: grid; grid-template-columns: 167px 52px 73px 35px 155px; align-items: center; padding-left: 2px; }
.m1, .m2, .m3, .m4 { display: flex; align-items: center; justify-content: space-between; }
.m1 { padding-right: 5px; }
.m2 .icon { width: 10px; height: 10px; }
.m2 select { width: 33px; height: 11px; }
.m2 .small .icon { width: 4px; height: 4px; }
.m3 { padding-left: 4px; }
.modes .by { height: 11px; }
.panel { display: flex; justify-content: space-between; padding-top: 3px; font-size: 7px; }
.entity { display: grid; grid-template-columns: 23px 132px 22px; height: 12px; }
.raised { background: #efedf0; border: 1px solid; border-color: #fafafa #77757a #77757a #fafafa; }
.drop, .reset { display: grid; place-items: center; }
.drop .icon { width: 7px; height: 7px; }
.reset .icon { width: 8px; height: 8px; }
.comps { background: #e6e45e; border: 1px solid #52d8b4; line-height: 9px; }
.right { width: 216px; }
.dir { display: grid; grid-template-columns: 98px 39px 16px; height: 12px; }
.base { background: #bf5cc3; border: 1px solid #8a4590; line-height: 9px; }
.angle { display: grid; grid-template-columns: 16px 119px; margin: 19px 0 0 38px; height: 11px; }
.angle input { border-top: 1px solid #8c8a8e; border-left: 1px solid #8c8a8e; text-align: right; padding-right: 5px; font: 8px/9px "Liberation Sans", sans-serif; color: #111; }
.popup { position: absolute; left: 223px; top: 11px; width: 166px; height: 83px; border: 5px solid #c91a1c; background: #f0eef1; box-shadow: 1px 2px 4px #0007, inset 1px 2px 3px #0005; padding: 7px 0 0 21px; }
.choices { position: relative; display: grid; grid-auto-rows: 1fr; height: 66px; padding: 9px 10px 5px 14px; border-left: 1px solid #fff; border-bottom: 1px solid #bbb9bd; font-size: 7px; }
.choices button { line-height: 8px; min-height: 0; }
.mark { position: absolute; left: 79px; top: 1px; width: 6px; height: 1px; background: #555; }
.focus { position: absolute; left: 419px; top: 41px; width: 112px; height: 30px; border: 4px solid #c91a1c; box-shadow: 1px 2px 4px #0007, inset 1px 2px 3px #0005; }

.status { display: flex; justify-content: space-between; padding-left: 5px; font-size: 7px; line-height: 12px; }
.status i { width: 42px; border: 1px solid #333; border-width: 1px 0 0 1px; }
.watermark { position: absolute; right: 0; bottom: 0; width: 125px; height: 58px; overflow: hidden; pointer-events: none; text-align: center; font-family: "Noto Sans CJK SC", sans-serif; }
.wm { display: block; font-size: 41px; line-height: 44px; font-weight: 700; white-space: nowrap; color: transparent; -webkit-text-stroke: 1px #bcbabe; }
.url { position: absolute; right: 3px; bottom: 0; font: 13px/12px "Liberation Sans", sans-serif; color: #f8f8f8; -webkit-text-stroke: 1px #b4b2b6; paint-order: stroke fill; }
</style>
